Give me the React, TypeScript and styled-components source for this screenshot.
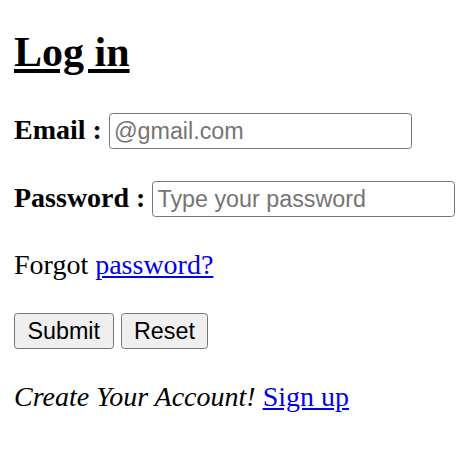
import React from "react";
import styled, { createGlobalStyle } from "styled-components";

const GlobalStyle = createGlobalStyle`
  html, body {
    margin: 0;
    padding: 0;
    background: #ffffff;
  }
  body {
    font-family: "Liberation Serif", "Times New Roman", serif;
    font-size: 28px;
    color: #000000;
  }
`;

const Page = styled.div`
  padding: 1px 14px 0;
`;

const Title = styled.h1`
  font-size: 42px;
  font-weight: bold;
  text-decoration: underline;
  margin: 27px 0 37px;
  line-height: normal;
`;

const Row = styled.p`
  margin: 32px 0;
  line-height: normal;
  white-space: nowrap;
`;

const Label = styled.label`
  font-weight: bold;
`;

const TextInput = styled.input`
  box-sizing: border-box;
  width: 303px;
  height: 36px;
  font-family: "Liberation Sans", Arial, sans-serif;
  font-size: 23.3px;
  padding: 2px 4px;
  border: 1.75px solid #767676;
  border-radius: 3.5px;
  color: #000;
  background: #fff;
  &::placeholder {
    color: #757575;
  }
`;

const Button = styled.button`
  box-sizing: border-box;
  height: 36px;
  font-family: "Liberation Sans", Arial, sans-serif;
  font-size: 23.3px;
  padding: 0 12.5px;
  border: 1.75px solid #767676;
  border-radius: 3.5px;
  background: #efefef;
  color: #000;
`;

const Link = styled.a`
  color: #0000ee;
  text-decoration: underline;
`;

const Note = styled.i`
  font-style: italic;
`;

export default function App() {
  return (
    <>
      <GlobalStyle />
      <Page>
        <Title>Log in</Title>
        <form onSubmit={(e) => e.preventDefault()}>
          <Row>
            <Label htmlFor="email">Email :</Label>{" "}
            <TextInput id="email" type="email" placeholder="@gmail.com" />
          </Row>
          <Row>
            <Label htmlFor="pw">Password :</Label>{" "}
            <TextInput id="pw" type="password" placeholder="Type your password" />
          </Row>
          <Row>
            Forgot <Link href="#">password?</Link>
          </Row>
          <Row>
            <Button type="submit">Submit</Button> <Button type="reset">Reset</Button>
          </Row>
          <Row>
            <Note>Create Your Account!</Note> <Link href="#">Sign up</Link>
          </Row>
        </form>
      </Page>
    </>
  );
}
